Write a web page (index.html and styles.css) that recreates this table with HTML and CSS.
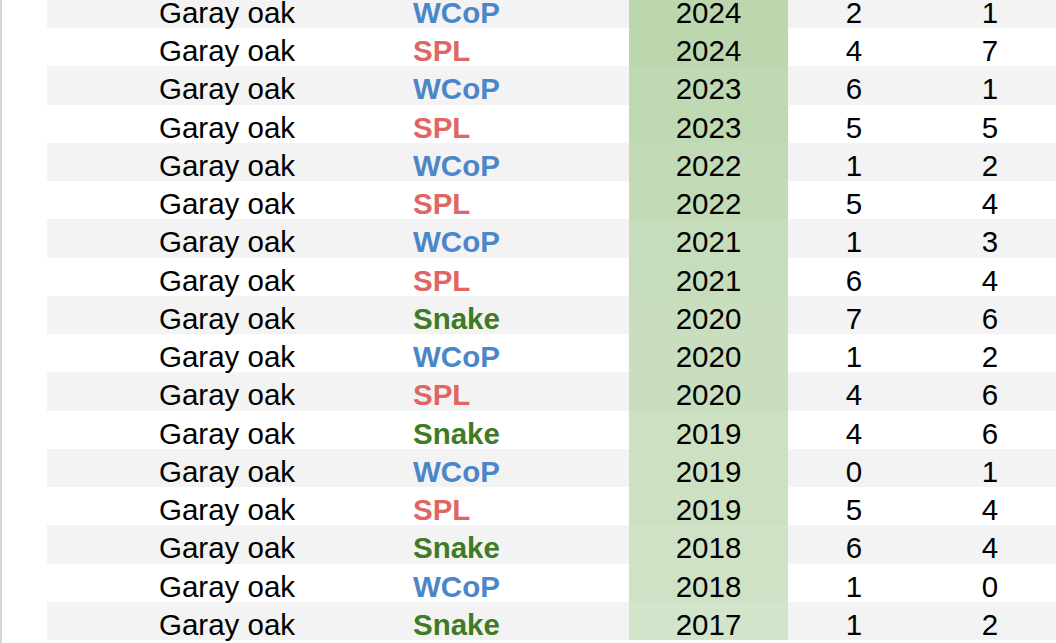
FILE: index.html
```html
<!DOCTYPE html>
<html>
<head>
<meta charset="utf-8">
<link rel="stylesheet" href="styles.css">
</head>
<body>
<div class="frame">
  <div class="sheet">
    <div class="row"><div class="c name">Garay oak</div><div class="c src wcop">WCoP</div><div class="c yr y2024">2024</div><div class="c num">2</div><div class="c num">1</div></div>
    <div class="row"><div class="c name">Garay oak</div><div class="c src spl">SPL</div><div class="c yr y2024">2024</div><div class="c num">4</div><div class="c num">7</div></div>
    <div class="row"><div class="c name">Garay oak</div><div class="c src wcop">WCoP</div><div class="c yr y2023">2023</div><div class="c num">6</div><div class="c num">1</div></div>
    <div class="row"><div class="c name">Garay oak</div><div class="c src spl">SPL</div><div class="c yr y2023">2023</div><div class="c num">5</div><div class="c num">5</div></div>
    <div class="row"><div class="c name">Garay oak</div><div class="c src wcop">WCoP</div><div class="c yr y2022">2022</div><div class="c num">1</div><div class="c num">2</div></div>
    <div class="row"><div class="c name">Garay oak</div><div class="c src spl">SPL</div><div class="c yr y2022">2022</div><div class="c num">5</div><div class="c num">4</div></div>
    <div class="row"><div class="c name">Garay oak</div><div class="c src wcop">WCoP</div><div class="c yr y2021">2021</div><div class="c num">1</div><div class="c num">3</div></div>
    <div class="row"><div class="c name">Garay oak</div><div class="c src spl">SPL</div><div class="c yr y2021">2021</div><div class="c num">6</div><div class="c num">4</div></div>
    <div class="row"><div class="c name">Garay oak</div><div class="c src snake">Snake</div><div class="c yr y2020">2020</div><div class="c num">7</div><div class="c num">6</div></div>
    <div class="row"><div class="c name">Garay oak</div><div class="c src wcop">WCoP</div><div class="c yr y2020">2020</div><div class="c num">1</div><div class="c num">2</div></div>
    <div class="row"><div class="c name">Garay oak</div><div class="c src spl">SPL</div><div class="c yr y2020">2020</div><div class="c num">4</div><div class="c num">6</div></div>
    <div class="row"><div class="c name">Garay oak</div><div class="c src snake">Snake</div><div class="c yr y2019">2019</div><div class="c num">4</div><div class="c num">6</div></div>
    <div class="row"><div class="c name">Garay oak</div><div class="c src wcop">WCoP</div><div class="c yr y2019">2019</div><div class="c num">0</div><div class="c num">1</div></div>
    <div class="row"><div class="c name">Garay oak</div><div class="c src spl">SPL</div><div class="c yr y2019">2019</div><div class="c num">5</div><div class="c num">4</div></div>
    <div class="row"><div class="c name">Garay oak</div><div class="c src snake">Snake</div><div class="c yr y2018">2018</div><div class="c num">6</div><div class="c num">4</div></div>
    <div class="row"><div class="c name">Garay oak</div><div class="c src wcop">WCoP</div><div class="c yr y2018">2018</div><div class="c num">1</div><div class="c num">0</div></div>
    <div class="row"><div class="c name">Garay oak</div><div class="c src snake">Snake</div><div class="c yr y2017">2017</div><div class="c num">1</div><div class="c num">2</div></div>
  </div>
</div>
</body>
</html>
```
FILE: styles.css
```css
html, body {
  margin: 0;
  padding: 0;
  background: #ffffff;
  overflow: hidden;
  width: 1056px;
  height: 643px;
}
.frame {
  height: 643px;
  border-left: 2px solid #d6d6d6;
  padding-left: 45px;
  box-sizing: border-box;
  overflow: hidden;
}
.sheet {
  margin-top: -10.25px;
  width: 1013px;
}
.row {
  display: grid;
  grid-template-columns: 336px 246px 159px 132px 140px;
  height: 38.25px;
  font-family: "Liberation Sans", Arial, sans-serif;
  font-size: 29.5px;
  color: #000000;
}
.row:nth-child(odd) {
  background: #f3f3f3;
}
.c {
  box-sizing: border-box;
  padding-top: 8px;
  line-height: 30.25px;
  white-space: nowrap;
}
.name { padding-left: 112px; }
.src { padding-left: 30px; font-weight: bold; }
.wcop { color: #4a86c8; }
.spl { color: #e06666; }
.snake { color: #3f7a24; }
.yr, .num { text-align: center; }
.y2024 { background: #bcd7ae; }
.y2023 { background: #bfd9b2; }
.y2022 { background: #c2dbb6; }
.y2021 { background: #c5ddba; }
.y2020 { background: #c9debe; }
.y2019 { background: #cce0c2; }
.y2018 { background: #cfe2c6; }
.y2017 { background: #d2e4ca; }
```
